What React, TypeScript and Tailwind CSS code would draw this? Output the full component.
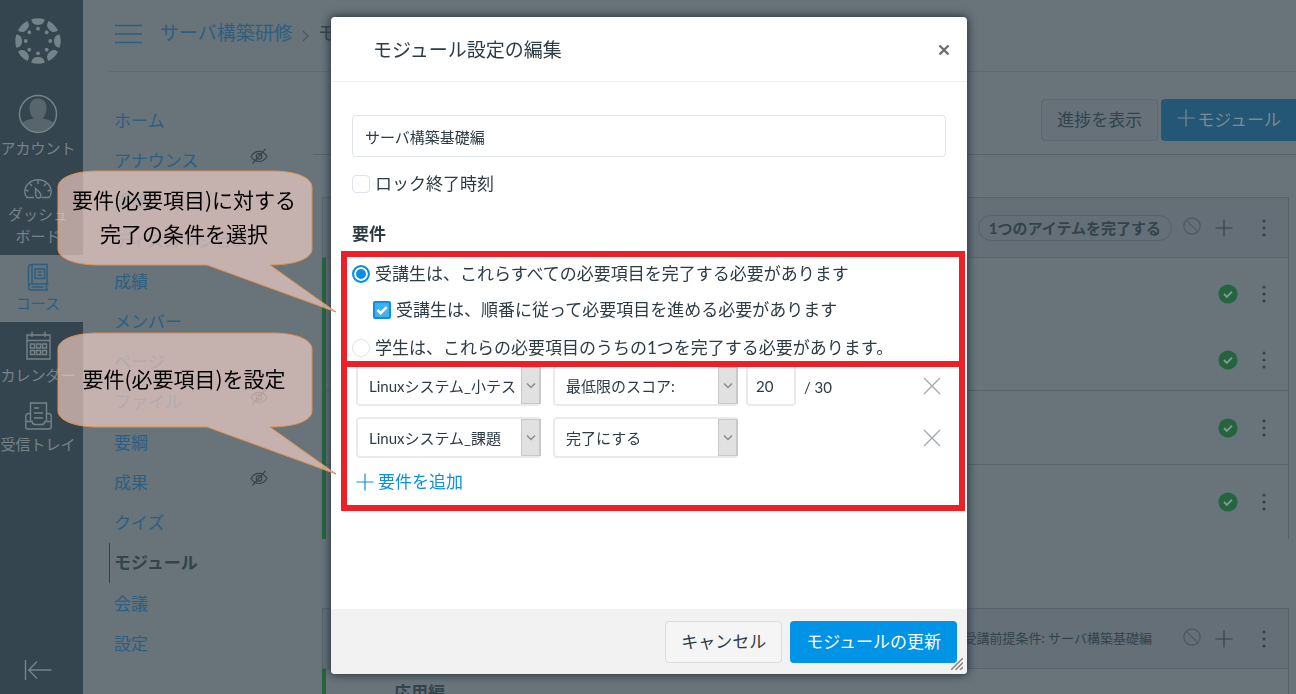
import React from 'react';

const courseLinks = [
  { label: 'ホーム' },
  { label: 'アナウンス', hidden: true },
  { label: '課題' },
  { label: 'ディスカッション' },
  { label: '成績' },
  { label: 'メンバー' },
  { label: 'ページ' },
  { label: 'ファイル', hidden: true },
  { label: '要綱' },
  { label: '成果', hidden: true },
  { label: 'クイズ' },
  { label: 'モジュール', active: true },
  { label: '会議' },
  { label: '設定' },
];

function CanvasLogo() {
  const angles = [0, 45, 90, 135, 180, 225, 270, 315];
  return (
    <svg className="size-[46px]" viewBox="-23 -23 46 46" fill="#75828a" aria-hidden="true">
      {angles.map((a) => (
        <g key={a} transform={`rotate(${a})`}>
          <path d="M-6.6-21.7A22.7 22.7 0 0 1 6.6-21.7C6.300-18 4-16 0-16S-6.300-18-6.600-21.700Z" />
          <circle cy="-12.300" r="1.900" />
        </g>
      ))}
    </svg>
  );
}

function Avatar() {
  return (
    <svg className="size-10" viewBox="0 0 40 40" aria-hidden="true">
      <defs>
        <clipPath id="avatar-clip">
          <circle cx="20" cy="20" r="18" />
        </clipPath>
      </defs>
      <g clipPath="url(#avatar-clip)" fill="#58656c">
        <path d="M20 4.500c5.500 0 8.500 4 8.500 9.500 0 5-2.500 9.500-4.500 11h-8c-2-1.500-4.500-6-4.500-11 0-5.500 3-9.500 8.500-9.500z" />
        <path d="M2 40V31c3-4.500 9-5.500 13-6.500h10c4 1 10 2 13 6.500v9z" />
      </g>
      <circle cx="20" cy="20" r="18.500" fill="none" stroke="#75828a" strokeWidth="1.500" />
    </svg>
  );
}

function GaugeIcon() {
  return (
    <svg className="h-5 w-7" viewBox="0 0 28 20" fill="none" stroke="#75828a" strokeWidth="1.400" aria-hidden="true">
      <path d="M10 18.500H3C1.500 17 .8 15 .8 13 .8 6 6.700.8 14 .8S27.200 6 27.200 13c0 2-.7 4-2.200 5.500h-7" />
      <path d="M14 1v4M6 4.500l2 2.500M22 4.500 20 7M1.500 11l3 1M26.500 11l-3 1" />
      <path d="M11.500 9.500c2 2 5.500 4.500 5.500 7 0 1.500-1 2.500-2.500 2.500S12 18 11.800 16.500c-.3-2-.3-4.500-.3-7z" />
    </svg>
  );
}

function BookIcon() {
  return (
    <svg className="h-[29px] w-[23px]" viewBox="0 0 23 29" fill="none" stroke="#2d5f80" strokeWidth="1.500" aria-hidden="true">
      <path d="M20 21V1.500H4.500C2.700 1.500 1.500 2.700 1.500 4.500V24c0 1.800 1.200 3 3 3h16.500M1.500 24c0-1.700 1.200-3 3-3H21.500M19.500 21v6M4.500 24h12M5 1.500V21" />
      <path d="M8 6h9.500v9.500H8zM10.500 9H15M10.500 12.300H15" />
    </svg>
  );
}

function CalendarIcon() {
  return (
    <svg className="h-[29px] w-[25px]" viewBox="0 0 25 29" fill="none" stroke="#75828a" strokeWidth="1.400" aria-hidden="true">
      <path d="M1 4h23v24H1zM1 9.500h23M6 .5V6M19 .5V6" />
      <path d="M4.500 13h4v4h-4zM10.500 13h4v4h-4zM16.500 13h4v4h-4zM4.500 19.500h4v4h-4zM10.500 19.500h4v4h-4zM16.500 19.500h4v4h-4z" />
    </svg>
  );
}

function InboxIcon() {
  return (
    <svg className="h-7 w-[27px]" viewBox="0 0 27 28" fill="none" stroke="#75828a" strokeWidth="1.400" aria-hidden="true">
      <path d="M5.500 19V1h16v18M5.500 11.500H3.500C2 11.500.8 12.500.8 14v11c0 1.300.7 2 2 2h21.400c1.300 0 2-.7 2-2V14c0-1.500-1.200-2.500-2.700-2.500h-2" />
      <path d="M.8 19.500h6.200c.5 2.500 1.500 3 3 3h7c1.500 0 2.500-.5 3-3h6.200M9 6h5M9 11h9M9 16h9" />
    </svg>
  );
}

function HiddenEye() {
  return (
    <svg className="h-4 w-[18px]" viewBox="0 0 18 16" fill="none" stroke="#33434c" strokeWidth="1.200" aria-hidden="true">
      <path d="M1 8.500C3 5 5.800 3.300 9 3.300S15 5 17 8.500c-2 3.200-4.800 5-8 5s-6-1.800-8-5z" />
      <circle cx="9" cy="8.400" r="2.700" />
      <path d="M15.500.8 2.500 15.500" />
    </svg>
  );
}

function NoEntryIcon() {
  return (
    <svg className="mb-1 size-[18px]" viewBox="0 0 18 18" fill="none" stroke="#4d5a62" strokeWidth="1.200" aria-hidden="true">
      <circle cx="9" cy="9" r="8.200" />
      <path d="m3.300 3.300 11.400 11.400" />
    </svg>
  );
}

function PlusIcon({ className }: { className: string }) {
  return (
    <svg className={className} viewBox="0 0 18 18" fill="none" stroke="currentColor" strokeWidth="1.200" aria-hidden="true">
      <path d="M9 .5v17M.5 9h17" />
    </svg>
  );
}

function MoreButton() {
  return (
    <button type="button" aria-label="管理" className="flex w-[18px] justify-center">
      <svg className="h-[18px] w-1" viewBox="0 0 4 18" fill="#33434c" aria-hidden="true">
        <circle cx="2" cy="2" r="1.500" />
        <circle cx="2" cy="9" r="1.500" />
        <circle cx="2" cy="16" r="1.500" />
      </svg>
    </button>
  );
}

function PublishedIcon() {
  return (
    <svg className="size-5" viewBox="0 0 20 20" aria-hidden="true">
      <circle cx="10" cy="10" r="9.600" fill="#24653f" />
      <path d="m6 10 2.800 2.800L14 7.600" fill="none" stroke="#87949a" strokeWidth="1.900" />
    </svg>
  );
}

function GlobalNav() {
  const item = 'flex w-full flex-col items-center pr-[7px]';
  return (
    <nav className="flex w-[83px] shrink-0 flex-col bg-[#35454f] text-[15px] leading-[22px] text-[#75828a]">
      <a href="#home" aria-label="Canvas" className={`${item} pt-[18px] pb-[30px]`}>
        <CanvasLogo />
      </a>
      <a href="#account" className={`${item} whitespace-nowrap`}>
        <Avatar />
        <span className="pt-[3px]">アカウント</span>
      </a>
      <a href="#dashboard" className={`${item} pt-5 pb-2`}>
        <GaugeIcon />
        <span className="pt-1 text-center">ダッシュ<br />ボード</span>
      </a>
      <a href="#courses" className={`${item} bg-[#68737a] pt-2 pb-2 text-[#2d5f80]`}>
        <BookIcon />
        <span>コース</span>
      </a>
      <a href="#calendar" className={`${item} pt-[9px] whitespace-nowrap`}>
        <CalendarIcon />
        <span className="pt-1">カレンダー</span>
      </a>
      <a href="#inbox" className={`${item} pt-4 whitespace-nowrap`}>
        <InboxIcon />
        <span className="pt-[3px]">受信トレイ</span>
      </a>
      <button type="button" aria-label="ナビゲーションを最小化" className="mt-auto flex w-full justify-center pr-[7px] pb-[14px]">
        <svg className="h-5 w-7" viewBox="0 0 28 20" fill="none" stroke="#75828a" strokeWidth="1.400" aria-hidden="true">
          <path d="M1.500 0v20M27.500 10H5M13 1.500 4.800 10l8.200 8.500" />
        </svg>
      </button>
    </nav>
  );
}

function CourseNav() {
  return (
    <ul className="w-[160px] pt-[29px] text-[17px] leading-6 text-[#2d5f80] [&>li:nth-child(4n)]:mb-px">
      {courseLinks.map((l) => (
        <li
          key={l.label}
          className={
            l.active
              ? 'flex h-10 items-center border-l border-[#33434c] pl-1 font-bold text-[#33434c]'
              : 'flex h-10 items-center justify-between pl-[5px]'
          }
        >
          <a href="#section" className="whitespace-nowrap">{l.label}</a>
          {l.hidden && (
            <span className="pr-px pb-[11px]">
              <HiddenEye />
            </span>
          )}
        </li>
      ))}
    </ul>
  );
}

function ModuleHeader({ children }: { children: React.ReactNode }) {
  return (
    <header className="flex h-[61px] items-center justify-end border border-[#56636b] bg-[#646f77] pr-[15px] text-[#33434c]">
      {children}
      <NoEntryIcon />
      <button type="button" aria-label="アイテムを追加" className="mr-[22px] ml-[14px]">
        <PlusIcon className="size-[18px]" />
      </button>
      <MoreButton />
    </header>
  );
}

function ModuleRow({ className }: { className: string }) {
  return (
    <li className={`flex items-center justify-end gap-[17px] border-[#56636b] pr-[15px] ${className}`}>
      <PublishedIcon />
      <MoreButton />
    </li>
  );
}

function Modules() {
  return (
    <main className="min-w-0 flex-1">
      <div className="flex h-[83px] items-end justify-end gap-[3px] border-b border-[#56636b] pb-[13px] text-[17px]">
        <button type="button" className="h-[42px] rounded-sm border border-[#5b6870] bg-[#66717a] px-[15px] text-[#33434c]">
          進捗を表示
        </button>
        <button type="button" className="flex h-[42px] items-center gap-0.5 rounded-l-sm bg-[#245776] pr-[15px] pl-4 text-[#7d8a91]">
          <PlusIcon className="mb-1 size-[18px]" />
          モジュール
        </button>
      </div>
      <section className="mt-[42px] mr-[7px] ml-[9px]">
        <ModuleHeader>
          <span className="mr-[11px] rounded-full border border-[#56636b] px-[10px] text-[15px] leading-6 font-bold">
            1つのアイテムを完了する
          </span>
        </ModuleHeader>
        <ul className="border-r border-l-4 border-r-[#56636b] border-l-[#24653f]">
          <ModuleRow className="h-[71px]" />
          <ModuleRow className="h-[62px] border-b" />
          <ModuleRow className="h-[74px] border-b" />
          <ModuleRow className="h-[74px]" />
        </ul>
      </section>
      <section className="mt-[69px] mr-[7px] ml-[9px]">
        <ModuleHeader>
          <span className="mr-[31px] text-[13px]">受講前提条件: サーバ構築基礎編</span>
        </ModuleHeader>
        <div className="flex h-16 items-start border-r border-l-4 border-r-[#56636b] border-l-[#24653f] pt-[11px] pl-[68px] text-[17px] font-bold text-[#33434c]">
          応用編
        </div>
      </section>
    </main>
  );
}

function Dropdown({ label, value }: { label: string; value: string }) {
  return (
    <div className="relative w-[185px] shrink-0">
      <select
        aria-label={label}
        className="block h-[41px] w-full appearance-none rounded-sm border-2 border-[#e8eaec] bg-white pr-[18px] pl-[11px] text-[15px] text-[#2d3b45]"
      >
        <option>{value}</option>
      </select>
      <span className="pointer-events-none absolute inset-y-0.5 right-0 flex w-5 items-center justify-center border border-r-2 border-[#c6c8ca] bg-[#e1e1e1]">
        <svg className="h-2 w-[10px]" viewBox="0 0 10 8" fill="none" stroke="#8c8c8c" strokeWidth="1.500" aria-hidden="true">
          <path d="M1 1.500 5 5.500 9 1.500" />
        </svg>
      </span>
    </div>
  );
}

function RemoveButton() {
  return (
    <button type="button" aria-label="要件を削除" className="mr-[18px] ml-auto">
      <svg className="size-[18px]" viewBox="0 0 18 18" fill="none" stroke="#a3a8ac" strokeWidth="1.300" aria-hidden="true">
        <path d="m1 1 16 16M17 1 1 17" />
      </svg>
    </button>
  );
}

function CheckBox({ id, checked }: { id: string; checked?: boolean }) {
  return (
    <span className="relative flex size-[18px] shrink-0">
      <input
        id={id}
        type="checkbox"
        defaultChecked={checked}
        className="peer size-[18px] appearance-none rounded-sm border border-[#dde3e8] bg-white checked:rounded-xs checked:border-2 checked:border-[#0a8fe3] checked:bg-[#45aeee]"
      />
      <svg className="pointer-events-none absolute inset-0 hidden size-[18px] peer-checked:block" viewBox="0 0 18 18" fill="none" stroke="#fff" strokeWidth="2.600" aria-hidden="true">
        <path d="m4.500 9 3.200 3.200 6-6" />
      </svg>
    </span>
  );
}

const radioClass =
  'size-[18px] shrink-0 appearance-none rounded-full border border-[#dde3e8] bg-white checked:border-2 checked:border-[#0a8fe3] checked:bg-[#0a8fe3] checked:shadow-[inset_0_0_0_2px_white]';

function ModuleDialog() {
  return (
    <div className="fixed inset-0 flex items-start justify-center pt-[17px] pl-0.5">
      <div
        role="dialog"
        aria-labelledby="dialog-title"
        className="flex h-[calc(100vh-37px)] w-[636px] flex-col rounded-sm bg-white text-[17px] leading-6 text-[#2d3b45] shadow-[0_0_8px_1px_#26343c]"
      >
        <header className="flex h-[65px] shrink-0 items-center justify-between border-b border-[#eeeff0] pt-0.5 pr-[17px] pl-[42px]">
          <h2 id="dialog-title" className="text-[19px]">モジュール設定の編集</h2>
          <button type="button" aria-label="閉じる">
            <svg className="size-3" viewBox="0 0 12 12" fill="none" stroke="#6f6f6f" strokeWidth="2.400" aria-hidden="true">
              <path d="m1.500 1.500 9 9M10.500 1.500l-9 9" />
            </svg>
          </button>
        </header>

        <div className="flex-1 px-[10px] pt-[33px]">
          <div className="px-[11px]">
            <input
              aria-label="モジュール名"
              defaultValue="サーバ構築基礎編"
              className="block h-[42px] w-full rounded-sm border border-[#dfe5ea] px-3 text-[15px]"
            />
            <div className="flex items-center gap-[5px] pt-[15px]">
              <CheckBox id="lock" />
              <label htmlFor="lock">ロック終了時刻</label>
            </div>
            <h3 className="pt-[26px] pb-[5px] font-bold">要件</h3>
          </div>

          <div role="radiogroup" aria-label="完了の条件" className="-mr-2 border-6 border-[#ef1f28] pl-[5px]">
            <div className="flex h-[33px] items-center gap-[5px]">
              <input id="all" name="completion" type="radio" defaultChecked className={radioClass} />
              <label htmlFor="all">受講生は、これらすべての必要項目を完了する必要があります</label>
            </div>
            <div className="flex h-10 items-center gap-[5px] pl-[21px]">
              <CheckBox id="order" checked />
              <label htmlFor="order">受講生は、順番に従って必要項目を進める必要があります</label>
            </div>
            <div className="flex h-[31px] items-center gap-[5px] pt-1">
              <input id="one" name="completion" type="radio" className={radioClass} />
              <label htmlFor="one">学生は、これらの必要項目のうちの1つを完了する必要があります。</label>
            </div>
          </div>

          <div className="-mt-1.5 -mr-2 overflow-hidden border-6 border-[#ef1f28] pb-[11px] pl-[9px]">
            <div className="-mt-0.5 flex items-center">
              <Dropdown label="アイテム" value="Linuxシステム_小テスト" />
              <div className="ml-3">
                <Dropdown label="条件" value="最低限のスコア:" />
              </div>
              <input
                aria-label="最低スコア"
                defaultValue="20"
                className="ml-2 h-[41px] w-[50px] rounded-sm border-2 border-[#e8eaec] px-2 text-[15px]"
              />
              <span className="ml-2 pt-0.5 text-[15px]">/ 30</span>
              <RemoveButton />
            </div>
            <div className="mt-[11px] flex items-center">
              <Dropdown label="アイテム" value="Linuxシステム_課題" />
              <div className="ml-3">
                <Dropdown label="条件" value="完了にする" />
              </div>
              <RemoveButton />
            </div>
            <button type="button" className="mt-3 flex items-center gap-1 text-[#0a8fe3]">
              <PlusIcon className="size-[18px]" />
              要件を追加
            </button>
          </div>
        </div>

        <footer className="relative flex h-[65px] shrink-0 items-center justify-end gap-2 rounded-b-sm bg-[#f2f2f2] pr-[10px]">
          <button type="button" className="h-[42px] rounded-sm border border-[#d9dde0] bg-[#f5f5f5] px-[15px]">キャンセル</button>
          <button type="button" className="h-[42px] rounded-sm bg-[#0093e6] px-4 text-white">モジュールの更新</button>
          <svg className="absolute right-1 bottom-1 size-3" viewBox="0 0 12 12" fill="none" stroke="#808080" strokeWidth="1.400" aria-hidden="true">
            <path d="M0 12 12 0M4.500 12 12 4.500M9 12l3-3" />
          </svg>
        </footer>
      </div>
    </div>
  );
}

function Callout({ className, children }: { className: string; children: React.ReactNode }) {
  return (
    <div className={`absolute left-[57px] h-[144px] w-[280px] ${className}`}>
      <svg className="absolute inset-0 size-full" viewBox="0 0 280 144" aria-hidden="true">
        <path
          d="M41 1H216C240 1 255 8 255 17V79C255 88 240 95 213 95L279 142 150 95H41C17 95 1 88 1 79V17C1 8 17 1 41 1Z"
          fill="#f2cec5"
          fillOpacity="0.68"
          stroke="#df8f50"
        />
      </svg>
      <p className="relative flex h-[92px] w-[254px] items-center justify-center text-center font-['Noto_Sans_CJK_JP',sans-serif] text-[21px] leading-[34px] whitespace-nowrap text-black">
        {children}
      </p>
    </div>
  );
}

export default function App() {
  return (
    <div className="relative h-screen overflow-hidden bg-[#68737a] font-['Lato','Noto_Sans_CJK_JP',sans-serif]">
      <div className="flex h-full">
        <GlobalNav />
        <div className="min-w-0 flex-1 pl-[26px]">
          <div className="flex h-[72px] items-center border-b border-[#5d6a72] pb-1 pl-1.5 text-[19px] text-[#2d5f80]">
            <button type="button" aria-label="コースナビゲーション" className="mr-[18px]">
              <svg className="h-5 w-[27px]" viewBox="0 0 27 20" stroke="currentColor" strokeWidth="1.500" aria-hidden="true">
                <path d="M0 1.500h27M0 10h27M0 18.500h27" />
              </svg>
            </button>
            <a href="#course">サーバ構築研修</a>
            <svg className="mx-[9px] mt-1 h-3 w-[7px]" viewBox="0 0 7 12" fill="none" stroke="#4a5860" strokeWidth="1.300" aria-hidden="true">
              <path d="m1 1 5 5-5 5" />
            </svg>
            <span className="text-[#33434c]">モジュール</span>
          </div>
          <div className="flex">
            <div className="w-[204px] shrink-0">
              <CourseNav />
            </div>
            <Modules />
          </div>
        </div>
      </div>
      <ModuleDialog />
      <Callout className="top-[170px]">
        要件(必要項目)に対する
        <br />
        完了の条件を選択
      </Callout>
      <Callout className="top-[332px]">要件(必要項目)を設定</Callout>
    </div>
  );
}
